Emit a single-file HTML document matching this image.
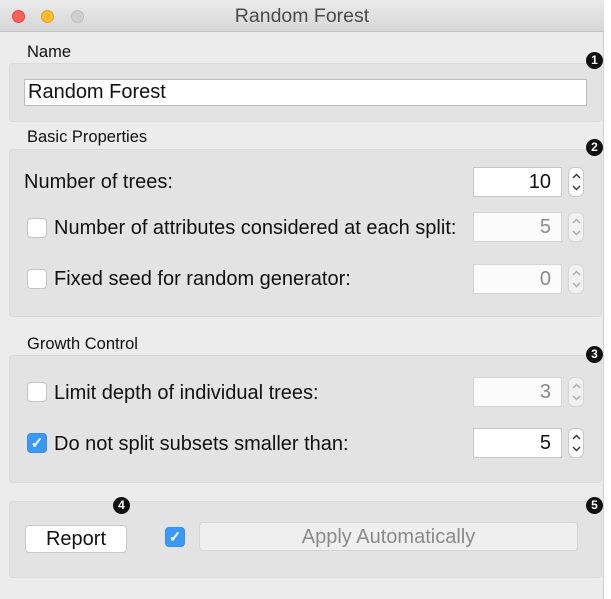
<!DOCTYPE html>
<html><head><style>
*{box-sizing:border-box;margin:0;padding:0}
body{width:611px;height:599px;background:#fff;font-family:"Liberation Sans",sans-serif;position:relative;overflow:hidden}
.win{position:absolute;left:0;top:0;width:604px;height:599px;background:#ececec;border-right:1px solid #d0d0d0}
.title{position:absolute;left:0;top:0;width:604px;height:32px;background:linear-gradient(#ebebeb,#d6d6d6);border-bottom:1px solid #c2c2c2;text-align:center;font-size:19.5px;line-height:33px;color:#4a4a4a}
.tl{position:absolute;top:10px;width:13px;height:13px;border-radius:50%}
.a{position:absolute}
.lbl{position:absolute;font-size:16.5px;color:#111}
.box{position:absolute;left:9px;width:593px;background:#e2e3e2;border:1px solid #dadada;border-radius:4px}
.t{position:absolute;font-size:20px;color:#111}
.cb{position:absolute;width:20px;height:20px;border-radius:4px;background:#fff;border:1px solid #c4c4c4}
.cb.on{background:#3b98f4;border-color:#3b8ee8;color:#fff;font-size:15px;text-align:center;line-height:19px;font-weight:bold}
.fld{position:absolute;left:473px;width:89px;height:30px;background:#fff;border:1px solid #c6c6c6;text-align:right;padding-right:10px;font-size:20px;line-height:28px;color:#111}
.fld.dis{color:#8a8a8a;background:#fbfbfb;border-color:#d4d4d4}
.sp{position:absolute;left:568px;width:16px;height:30px;border:1px solid #c8c8c8;border-radius:6px;background:#fff}
.sp svg{position:absolute;left:2px;top:3px}
.sp.dis{background:#f1f1f1;border-color:#d6d6d6}
.sp.dis svg path{stroke:#aaa}
.bd{position:absolute;width:17px;height:17px;border-radius:50%;background:#111;color:#fff;font-size:12px;font-weight:bold;text-align:center;line-height:17px}
</style></head><body>
<div class="win">
<div class="title">Random Forest
<div class="tl" style="left:12px;background:#fc5f57;border:1px solid #e0443e"></div>
<div class="tl" style="left:41px;background:#fdbc2e;border:1px solid #dea123"></div>
<div class="tl" style="left:71px;background:#d0d0d0;border:1px solid #bdbdbd"></div>
</div>

<div class="lbl" style="left:27px;top:43px">Name</div>
<div class="box" style="top:63px;height:59px"></div>
<div class="a" style="left:24px;top:79px;width:563px;height:27px;background:#fff;border:1px solid #bcbcbc;font-size:20px;line-height:25px;padding-left:3px;color:#111">Random Forest</div>
<div class="bd" style="left:586px;top:52px">1</div>

<div class="lbl" style="left:27px;top:128px">Basic Properties</div>
<div class="box" style="top:149px;height:168px"></div>
<div class="bd" style="left:586px;top:139px">2</div>
<div class="t" style="left:24px;top:171px">Number of trees:</div>
<div class="fld" style="top:167px">10</div><div class="sp" style="top:167px"><svg width="11" height="22"><path d="M2 7L5.5 3.5L9 7M2 15L5.5 18.5L9 15" stroke="#333" stroke-width="1.4" fill="none"/></svg></div>
<div class="cb" style="left:27px;top:218px"></div>
<div class="t" style="left:54px;top:217px">Number of attributes considered at each split:</div>
<div class="fld dis" style="top:212px">5</div><div class="sp dis" style="top:212px"><svg width="11" height="22"><path d="M2 7L5.5 3.5L9 7M2 15L5.5 18.5L9 15" stroke="#333" stroke-width="1.4" fill="none"/></svg></div>
<div class="cb" style="left:27px;top:269px"></div>
<div class="t" style="left:54px;top:268px">Fixed seed for random generator:</div>
<div class="fld dis" style="top:264px">0</div><div class="sp dis" style="top:264px"><svg width="11" height="22"><path d="M2 7L5.5 3.5L9 7M2 15L5.5 18.5L9 15" stroke="#333" stroke-width="1.4" fill="none"/></svg></div>

<div class="lbl" style="left:27px;top:335px">Growth Control</div>
<div class="box" style="top:355px;height:128px"></div>
<div class="bd" style="left:586px;top:346px">3</div>
<div class="cb" style="left:27px;top:382px"></div>
<div class="t" style="left:54px;top:382px">Limit depth of individual trees:</div>
<div class="fld dis" style="top:377px">3</div><div class="sp dis" style="top:377px"><svg width="11" height="22"><path d="M2 7L5.5 3.5L9 7M2 15L5.5 18.5L9 15" stroke="#333" stroke-width="1.4" fill="none"/></svg></div>
<div class="cb on" style="left:27px;top:433px">✓</div>
<div class="t" style="left:54px;top:433px">Do not split subsets smaller than:</div>
<div class="fld" style="top:428px">5</div><div class="sp" style="top:428px"><svg width="11" height="22"><path d="M2 7L5.5 3.5L9 7M2 15L5.5 18.5L9 15" stroke="#333" stroke-width="1.4" fill="none"/></svg></div>

<div class="box" style="top:501px;height:77px"></div>
<div class="bd" style="left:113px;top:497px">4</div>
<div class="bd" style="left:586px;top:497px">5</div>
<div class="a" style="left:25px;top:525px;width:102px;height:28px;background:#fff;border:1px solid #c8c8c8;border-radius:4px;text-align:center;font-size:20px;line-height:27px;color:#111">Report</div>
<div class="cb on" style="left:165px;top:527px">✓</div>
<div class="a" style="left:199px;top:522px;width:379px;height:29px;background:#efefef;border:1px solid #d6d6d6;border-radius:4px;text-align:center;font-size:20px;line-height:28px;color:#8a8a8a">Apply Automatically</div>
</div>
</body></html>
